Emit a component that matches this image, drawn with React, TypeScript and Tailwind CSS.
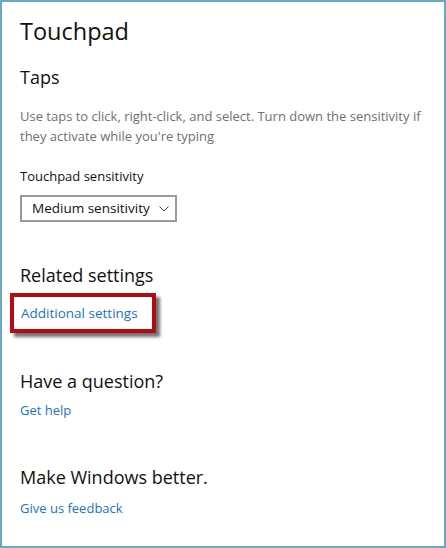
export default function App() {
  return (
    <div className="w-[446px] h-[548px] bg-white border-2 border-[#6aa9c4] overflow-hidden font-['Open_Sans',sans-serif]">
      <div className="pl-[18px] pr-2 pt-[12px] flex flex-col">
        <h1 className="text-[23.5px] leading-[34px] text-[#111] font-normal">Touchpad</h1>
        <h2 className="mt-[16px] text-[18px] leading-[26px] text-[#111]">Taps</h2>
        <p className="mt-[16px] text-[13px] leading-[20px] text-[#707070]">
          Use taps to click, right-click, and select. Turn down the sensitivity if
          they activate while you're typing
        </p>
        <label className="mt-[20px] text-[13px] leading-[20px] text-[#111]">
          Touchpad sensitivity
        </label>
        <button className="mt-[9px] w-[157px] h-[27px] border-2 border-[#9a9a9a] flex items-center gap-[9px] pl-[10px] text-[13.5px] text-[#111] whitespace-nowrap">
          <span>Medium sensitivity</span>
          <svg width="10" height="6" viewBox="0 0 10 6" fill="none">
            <path d="M0.5 0.5 L5 5 L9.5 0.5" stroke="#444" strokeWidth="1" />
          </svg>
        </button>
        <h2 className="mt-[40px] text-[18px] leading-[26px] text-[#111]">Related settings</h2>
        <div className="mt-[5px] -ml-[10px] w-[146px] h-[40px] border-4 border-[#b40a10] shadow-[4px_4px_3px_rgba(0,0,0,0.55)] flex items-center pl-[7px]">
          <a className="text-[13.5px] text-[#1a73c8] whitespace-nowrap">Additional settings</a>
        </div>
        <h2 className="mt-[35px] text-[18px] leading-[26px] text-[#111]">Have a question?</h2>
        <a className="mt-[6px] text-[13px] leading-[20px] text-[#1a73c8]">Get help</a>
        <h2 className="mt-[44px] text-[18px] leading-[26px] text-[#111]">Make Windows better.</h2>
        <a className="mt-[8px] text-[13px] leading-[20px] text-[#1a73c8]">Give us feedback</a>
      </div>
    </div>
  );
}
